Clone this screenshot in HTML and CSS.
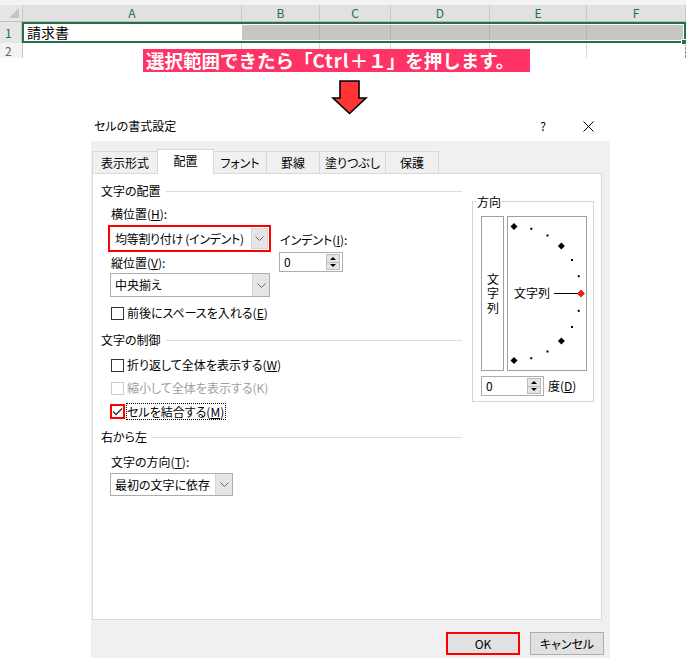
FILE: index.html
```html
<!DOCTYPE html>
<html lang="ja">
<head>
	<meta charset="UTF-8" />
	<meta name="viewport" content="width=device-width, initial-scale=1.0" />
	<title>セルの書式設定</title>
	<link rel="stylesheet" href="styles.css">
</head>
<body>
	<div class="sheet">
		<div class="sheet-top"></div>
		<div class="sheet-row col-head">
			<div class="corner"><svg width="10" height="10" viewBox="0 0 10 10"><polygon points="10,0 10,10 0,10" fill="#c4c4c4"/></svg></div>
			<div>A</div><div>B</div><div>C</div><div>D</div><div>E</div><div>F</div>
		</div>
		<div class="sel-row">
			<div class="row-no active">1</div>
			<div class="sel-range">
				<div class="cell-a">請求書</div>
				<div></div><div></div><div></div><div></div><div></div>
			</div>
		</div>
		<div class="sheet-row row2">
			<div class="row-no">2</div>
			<div></div><div></div><div></div><div></div><div></div><div class="page-break"></div>
		</div>
		<span class="fill-handle"></span>
		<div class="banner">選択範囲できたら「<span class="ctrl">Ctrl</span>＋１」を押します。</div>
	</div>

	<svg class="arrow" width="36" height="34" viewBox="0 0 36 34">
		<path d="M9 1 H28 V18 H35 L18.5 33.5 L2 18 H9 Z" fill="#ff3535" stroke="#000" stroke-width="1.6"/>
	</svg>

	<div class="dialog">
		<div class="dlg-title">
			<span class="dlg-name">セルの書式設定</span>
			<span class="dlg-help">?</span>
			<span class="dlg-close"><svg width="11" height="11" viewBox="0 0 11 11"><path d="M0.5 0.5 L10.5 10.5 M10.5 0.5 L0.5 10.5" stroke="#000" stroke-width="1"/></svg></span>
		</div>
		<div class="dlg-body">
			<ul class="tabs">
				<li>表示形式</li>
				<li class="active">配置</li>
				<li>フォント</li>
				<li>罫線</li>
				<li>塗りつぶし</li>
				<li>保護</li>
			</ul>
			<div class="panel">
				<div class="pane-left">
					<div class="grp-label">文字の配置</div>
					<div class="align-row">
						<div class="align-col">
							<div class="lbl">横位置(<u>H</u>):</div>
							<div class="mark-red">
								<div class="combo combo-h"><span class="combo-text">均等割り付け (インデント)</span><span class="drop"><svg width="9" height="5" viewBox="0 0 9 5"><polyline points="0.5,0.5 4.5,4.5 8.5,0.5" fill="none" stroke="#666"/></svg></span></div>
							</div>
							<div class="lbl lbl-v">縦位置(<u>V</u>):</div>
							<div class="combo combo-v"><span class="combo-text">中央揃え</span><span class="drop"><svg width="9" height="5" viewBox="0 0 9 5"><polyline points="0.5,0.5 4.5,4.5 8.5,0.5" fill="none" stroke="#666"/></svg></span></div>
						</div>
						<div class="indent-col">
							<div class="lbl">インデント(<u>I</u>):</div>
							<div class="spin spin-indent"><span class="spin-val">0</span><span class="spin-btns"><i class="up"></i><i class="down"></i></span></div>
						</div>
					</div>
					<div class="check chk-space"><span class="box"></span>前後にスペースを入れる(<u>E</u>)</div>

					<div class="grp-label grp-ctrl">文字の制御</div>
					<div class="check chk-wrap"><span class="box"></span>折り返して全体を表示する(<u>W</u>)</div>
					<div class="check chk-shrink disabled"><span class="box"></span>縮小して全体を表示する(K)</div>
					<div class="check chk-merge"><span class="box checked"><svg width="11" height="11" viewBox="0 0 11 11"><polyline points="1,5.5 4,8.5 10,2.5" fill="none" stroke="#333" stroke-width="1.3"/></svg></span><span class="focus">セルを結合する(<u>M</u>)</span></div>

					<div class="grp-label grp-rtl">右から左</div>
					<div class="lbl lbl-dir">文字の方向(<u>T</u>):</div>
					<div class="combo combo-dir"><span class="combo-text">最初の文字に依存</span><span class="drop"><svg width="9" height="5" viewBox="0 0 9 5"><polyline points="0.5,0.5 4.5,4.5 8.5,0.5" fill="none" stroke="#666"/></svg></span></div>
				</div>

				<div class="pane-right">
					<div class="dir">
						<div class="dir-title">方向</div>
						<div class="dir-boxes">
							<div class="vtext"><span>文字列</span></div>
							<div class="dial">
								<svg width="78" height="153" viewBox="0 0 78 153">
									<g fill="#000">
										<polygon points="6,6 9.5,9.5 6,13 2.5,9.5"/>
										<rect x="22.3" y="10.8" width="2" height="2"/>
										<rect x="38.5" y="17.5" width="2" height="2"/>
										<polygon points="53.4,25.6 56.9,29.1 53.4,32.6 49.9,29.1"/>
										<rect x="63" y="42" width="2" height="2"/>
										<rect x="69.7" y="58.2" width="2" height="2"/>
										<rect x="69.7" y="92.8" width="2" height="2"/>
										<rect x="63" y="109" width="2" height="2"/>
										<polygon points="53.4,120.4 56.9,123.9 53.4,127.4 49.9,123.9"/>
										<rect x="38.5" y="133.5" width="2" height="2"/>
										<rect x="22.3" y="140.2" width="2" height="2"/>
										<polygon points="6,140 9.5,143.5 6,147 2.5,143.5"/>
									</g>
									<text x="6" y="81" font-size="12" font-family="Noto Sans CJK JP, sans-serif">文字列</text>
									<line x1="46" y1="76.5" x2="70" y2="76.5" stroke="#000"/>
									<polygon points="73,73 76.5,76.5 73,80 69.5,76.5" fill="#ff1a1a" stroke="#900" stroke-width="0.6"/>
								</svg>
							</div>
						</div>
						<div class="deg-row">
							<div class="spin spin-deg"><span class="spin-val">0</span><span class="spin-btns"><i class="up"></i><i class="down"></i></span></div>
							<span class="deg-lbl">度(<u>D</u>)</span>
						</div>
					</div>
				</div>
			</div>
			<div class="btn-row">
				<button class="btn btn-ok">OK</button>
				<button class="btn">キャンセル</button>
			</div>
		</div>
	</div>
</body>
</html>
```

FILE: styles.css
```css
*{padding: 0;margin: 0;box-sizing: border-box;}
body{
	width: 686px;
	height: 658px;
	overflow: hidden;
	background: #fff;
	color: #000;
	font-family: "Noto Sans CJK JP", "Noto Sans", sans-serif;
	font-size: 12px;
	line-height: 16px;
}

/* sheet */
.sheet{position: relative;height: 58px;}
.sheet-top{height: 5px;background: #f3f3f3;}
.sheet-row{display: grid;grid-template-columns: 23px 219px 78px 71px 99px 97px 99px;}
.col-head{height: 17px;background: #e1e1e1;border-bottom: 1px solid #bdbdbd;color: #217346;text-align: center;line-height: 16px;}
.col-head div{border-right: 1px solid #c8c8c8;}
.corner{display: flex;align-items: flex-end;justify-content: flex-end;padding: 0 3px 3px 0;background: #e6e6e6;}
.sel-row{display: grid;grid-template-columns: 22px 664px;height: 21px;}
.row-no{background: #f3f3f3;border-right: 1px solid #c8c8c8;color: #666;padding-left: 5px;line-height: 21px;}
.row-no.active{color: #217346;background: #e6e6e6;}
.sel-range{display: grid;grid-template-columns: 217px 78px 71px 99px 97px 96px;border: 2px solid #217346;padding: 1px;background: #fff;}
.sel-range div{background: #c6c6c6;border-right: 1px solid #b3b3b3;}
.sel-range div:last-child{border-right: none;}
.sel-range .cell-a{background: #fff;border: none;font-size: 14px;line-height: 15px;padding-left: 2px;}
.row2{height: 15px;}
.row2 div{border-right: 1px solid #d9d9d9;}
.row2 .row-no{line-height: 15px;border-right-color: #c8c8c8;}
.row2 .page-break{border-right: 1px dashed #8a8a8a;}
.fill-handle{position: absolute;left: 681px;top: 39px;width: 6px;height: 6px;background: #217346;border: 1px solid #fff;}
.banner{
	position: absolute;
	left: 143px;
	top: 49px;
	width: 387px;
	height: 23px;
	padding-left: 3px;
	background: #ff3366;
	color: #fff;
	font-size: 18.5px;
	font-weight: bold;
	line-height: 23px;
	white-space: nowrap;
}
.banner .ctrl{letter-spacing: 1px;}

.arrow{display: block;margin: 22px 0 0 331px;overflow: visible;}

/* dialog */
.dialog{margin-left: 91px;width: 519px;font-feature-settings: "palt";}
.dlg-title{height: 27px;display: flex;align-items: center;padding: 0 12px 3px 3px;}
.dlg-name{flex: 1;font-size: 12px;}
.dlg-help{width: 20px;text-align: center;margin-right: 25px;}
.dlg-close{width: 20px;display: flex;justify-content: center;}
.dlg-body{height: 517px;background: #f0f0f0;padding: 8px 8px 0 1px;}

.tabs{display: flex;align-items: flex-end;height: 24px;list-style: none;}
.tabs li{height: 22px;line-height: 21px;text-align: center;border: 1px solid #d9d9d9;border-bottom: none;margin-right: -1px;background: #f0f0f0;}
.tabs li:nth-child(1){width: 66px;}
.tabs li:nth-child(2){width: 57px;}
.tabs li:nth-child(3){width: 54px;}
.tabs li:nth-child(4){width: 54px;}
.tabs li:nth-child(5){width: 67px;}
.tabs li:nth-child(6){width: 54px;}
.tabs li.active{height: 25px;margin-bottom: -1px;background: #fff;line-height: 22px;position: relative;z-index: 1;}

.panel{display: flex;height: 447px;background: #fff;border: 1px solid #d9d9d9;padding: 9px 7px 0 8px;}
.pane-left{width: 361px;}
.pane-right{width: 122px;margin: 18px 0 0 10px;}

.grp-label{display: flex;align-items: center;height: 16px;}
.grp-label::after{content: "";flex: 1;height: 1px;background: #dcdcdc;margin-left: 5px;}
.lbl{height: 16px;}
u{text-decoration: underline;text-underline-offset: 1px;}

.align-row{display: flex;margin-top: 7px;padding-left: 7px;}
.align-col .lbl{margin-left: 3px;}
.mark-red{margin-top: 3px;width: 163px;height: 27px;border: 2px solid #ff0000;}
.lbl-v{margin-top: 3px;}
.indent-col{margin-left: 8px;padding-top: 26px;}
.indent-col .lbl{margin-left: 1px;}

.combo{display: flex;background: #fff;border: 1px solid #adadad;}
.combo-text{flex: 1;padding-left: 4px;white-space: nowrap;}
.drop{width: 17px;display: flex;align-items: center;justify-content: center;background: #e5e5e5;border-left: 1px solid #d4d4d4;}
.combo-h{height: 23px;border-color: #fff;line-height: 21px;}
.combo-h .combo-text{letter-spacing: -0.3px;}
.combo-h .drop{border: 1px solid #d4d4d4;}
.combo-v{margin: 2px 0 0 2px;width: 160px;height: 24px;line-height: 22px;}
.combo-dir{margin: 3px 0 0 9px;width: 123px;height: 23px;line-height: 21px;}

.spin{display: flex;background: #fff;border: 1px solid #adadad;height: 20px;}
.spin-val{flex: 1;padding-left: 4px;line-height: 18px;}
.spin-btns{display: flex;flex-direction: column;width: 16px;padding: 1px 2px 1px 0;}
.spin-btns i{flex: 1;display: flex;align-items: center;justify-content: center;background: #e5e5e5;border: 1px solid #bcbcbc;}
.spin-btns i + i{margin-top: -1px;}
.spin-btns i::before{content: "";border-left: 3px solid transparent;border-right: 3px solid transparent;}
.spin-btns .up::before{border-bottom: 3px solid #000;}
.spin-btns .down::before{border-top: 3px solid #000;}
.spin-indent{margin-top: 4px;width: 64px;}

.check{display: flex;align-items: center;height: 16px;margin-left: 10px;white-space: nowrap;}
.check .box{width: 13px;height: 13px;border: 1px solid #333;background: #fff;margin-right: 3px;}
.check.disabled{color: #a0a0a0;}
.check.disabled .box{border-color: #cccccc;}
.check .box.checked{width: 15px;height: 15px;border: 2px solid #ff0000;margin: 0 1px 0 -1px;display: flex;align-items: center;justify-content: center;}
.focus{border: 1px dotted #000;line-height: 15px;padding: 0 1px 0 0;}
.chk-space{margin-top: 8px;}
.grp-ctrl{margin-top: 11px;}
.chk-wrap{margin-top: 9px;}
.chk-shrink{margin-top: 7px;}
.chk-merge{margin-top: 7px;}
.grp-rtl{margin-top: 10px;}
.lbl-dir{margin: 9px 0 0 10px;}

/* orientation */
.dir{border: 1px solid #d5d5d5;padding: 0 0 5px 8px;}
.dir-title{display: table;margin: -8px 0 0 -5px;padding: 0 1px;background: #fff;}
.dir-boxes{display: flex;margin-top: 6px;}
.vtext{width: 23px;height: 155px;border: 1px solid #a0a0a0;display: flex;align-items: center;justify-content: center;padding-top: 3px;}
.vtext span{writing-mode: vertical-rl;letter-spacing: 2.5px;line-height: 14px;}
.dial{width: 80px;height: 155px;margin-left: 3px;border: 1px solid #a0a0a0;}
.dial svg{display: block;}
.deg-row{display: flex;align-items: center;margin-top: 5px;}
.spin-deg{width: 63px;}
.deg-lbl{margin-left: 4px;}

.btn-row{display: flex;justify-content: flex-end;margin: 12px -2px 0 0;}
.btn{width: 74px;height: 23px;margin-left: 10px;background: #e1e1e1;border: 1px solid #adadad;font-family: inherit;font-size: 12px;font-feature-settings: "palt";color: #000;}
.btn-ok{border: 2px solid #ff0000;}
```
